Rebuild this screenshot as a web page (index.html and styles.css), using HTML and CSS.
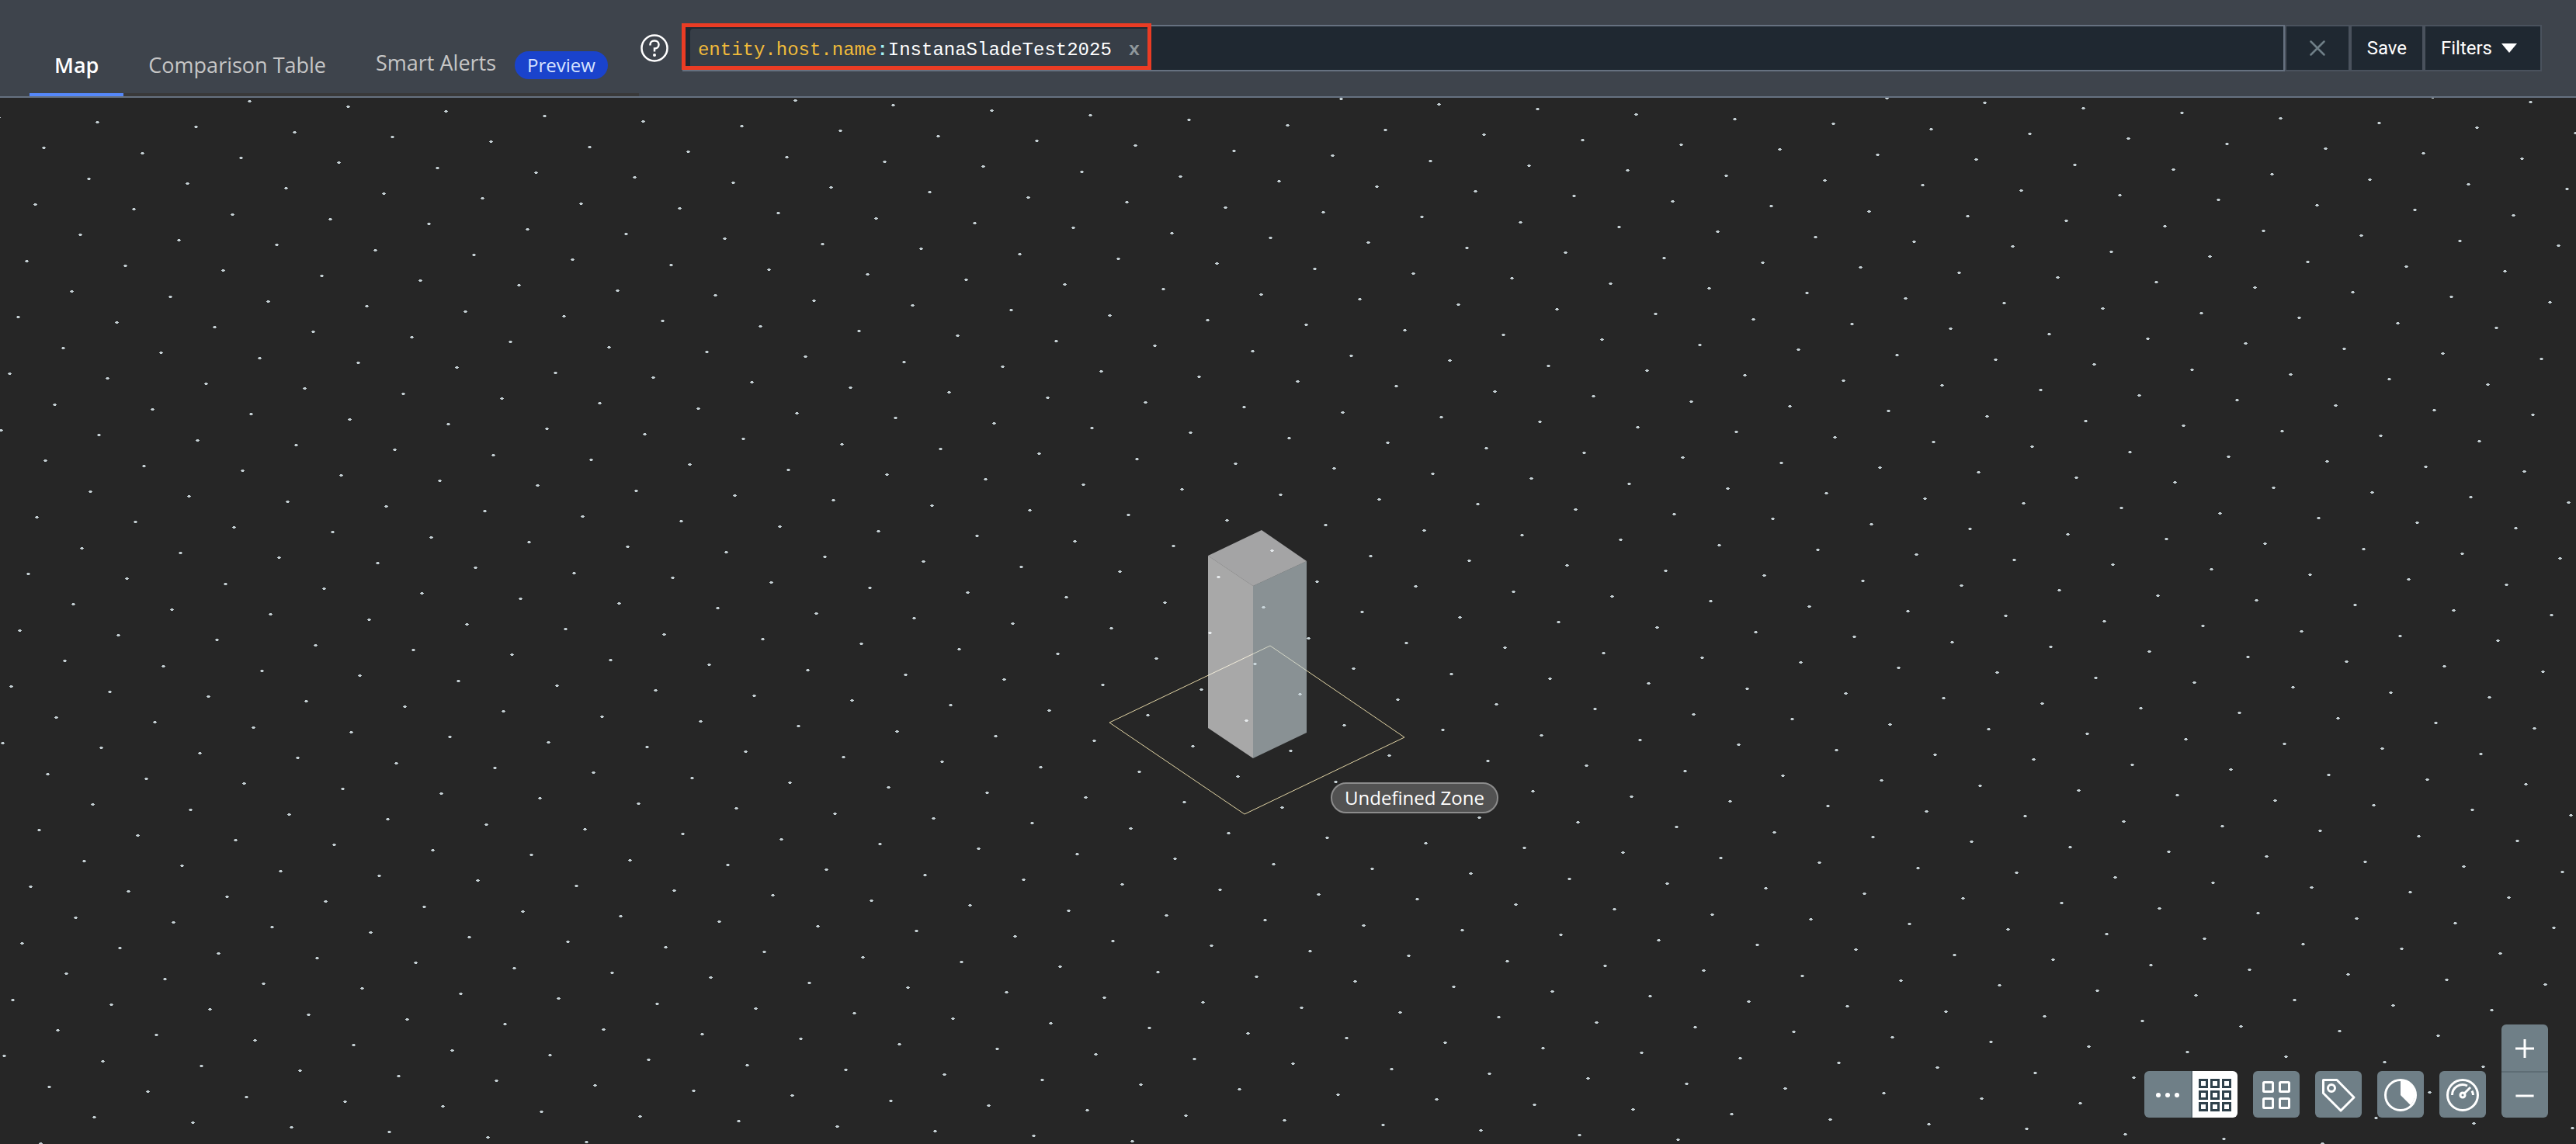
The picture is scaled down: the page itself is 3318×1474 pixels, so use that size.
FILE: index.html
```html
<!DOCTYPE html>
<html lang="en">
<head>
<meta charset="utf-8">
<title>Infrastructure Map</title>
<link rel="stylesheet" href="styles.css">
</head>
<body>
<header class="topbar">
  <nav class="tabs" aria-label="Views">
    <a class="tab tab-active" href="#map">Map</a>
    <a class="tab" href="#comparison">Comparison Table</a>
    <a class="tab tab-badged" href="#alerts"><span class="tab-label">Smart Alerts</span><span class="badge">Preview</span></a>
  </nav>
  <div class="search">
    <button class="help" type="button" aria-label="Help">
      <svg viewBox="0 0 36 36" width="36" height="36" fill="none" stroke="#fff" stroke-width="2"><circle cx="18" cy="18" r="16.5" stroke-width="2.5"/><path d="M12.500 14.500v-1a5 5 0 0 1 5-5h1a5 5 0 0 1 0 10h-.5v4" stroke-width="2.500"/><circle cx="18" cy="27" r="2" fill="#fff" stroke="none"/></svg>
    </button>
    <div class="query">
      <div class="highlight">
        <span class="chip"><span class="key">entity.host.name</span><span class="colon">:</span><span class="value">InstanaSladeTest2025</span><button class="chip-remove" type="button" aria-label="Remove filter">x</button></span>
      </div>
      <input class="query-input" type="text" aria-label="Search query">
    </div>
    <div class="actions">
      <button class="action action-clear" type="button" aria-label="Clear"><svg viewBox="0 0 20 20" width="20" height="20" stroke="#6f7f87" stroke-width="2.500" stroke-linecap="round"><path d="M1.500 1.500l17 17M18.500 1.500l-17 17"/></svg></button>
      <button class="action" type="button">Save</button>
      <button class="action action-filters" type="button">Filters <svg viewBox="0 0 20 12" width="20" height="12" fill="#fff"><path d="M0 0h20L10 12z"/></svg></button>
    </div>
  </div>
</header>
<main class="map">
  <svg class="scene" viewBox="0 0 3318 1348" preserveAspectRatio="xMidYMid slice" aria-hidden="true">
    <path id="stars" fill="#c3ced2"/>
    <path d="M1636 706L1809 824 1603 923 1429 805z" fill="none" stroke="#e0d3a4" stroke-width="1"/>
    <g>
      <path d="M1556 590L1614 629V851L1556 812z" fill="#fff" fill-opacity=".6"/>
      <path d="M1614 629L1683 597V818L1614 851z" fill="#cbd9de" fill-opacity=".6"/>
      <path d="M1556 590L1625 557 1683 597 1614 629z" fill="#f8f8fa" fill-opacity=".6"/>
    </g>
  </svg>
  <span class="zone">Undefined Zone</span>
  <div class="controls">
    <div class="pair">
      <button class="tool" type="button" aria-label="Compact"><svg viewBox="0 0 60 60" fill="#fff"><circle cx="18" cy="31" r="3"/><circle cx="30" cy="31" r="3"/><circle cx="42" cy="31" r="3"/></svg></button>
      <button class="tool tool-on" type="button" aria-label="Grid"><svg viewBox="0 0 58 60" fill="none" stroke="#2f414b" stroke-width="3"><path d="M9.500 11.500h9v9h-9zM24.500 11.500h9v9h-9zM39.500 11.500h9v9h-9zM9.500 26.500h9v9h-9zM24.500 26.500h9v9h-9zM39.500 26.500h9v9h-9zM9.500 41.500h9v9h-9zM24.500 41.500h9v9h-9zM39.500 41.500h9v9h-9z"/></svg></button>
    </div>
    <button class="tool" type="button" aria-label="Group"><svg viewBox="0 0 60 60" fill="none" stroke="#fff" stroke-width="3"><rect x="13.500" y="14.500" width="12" height="12" rx="1"/><rect x="34.500" y="14.500" width="12" height="12" rx="1"/><rect x="13.500" y="35.500" width="12" height="12" rx="1"/><rect x="34.500" y="35.500" width="12" height="12" rx="1"/></svg></button>
    <button class="tool" type="button" aria-label="Tags"><svg viewBox="0 0 60 60" fill="none" stroke="#fff" stroke-width="3" stroke-linejoin="round"><path d="M10.500 11.500h17.500L50 34 33 51 10.500 28.500z"/><circle cx="21" cy="22" r="4.500"/></svg></button>
    <button class="tool" type="button" aria-label="Metric"><svg viewBox="0 0 60 60" fill="none" stroke="#fff" stroke-width="3"><circle cx="30" cy="31" r="19.500"/><path d="M30 11V31L43 44A19.500 19.500 0 0 0 30 11z" fill="#fff" stroke="none"/></svg></button>
    <button class="tool" type="button" aria-label="Health"><svg viewBox="0 0 60 60" fill="none" stroke="#fff" stroke-width="3"><circle cx="30" cy="31" r="19.500"/><circle cx="30" cy="31" r="3"/><path d="M32.500 28.500L40 21M16.500 31a13.500 13.500 0 0 1 19.500-12M42 25.500a13.500 13.500 0 0 1 1.500 5.500"/></svg></button>
    <div class="zoom">
      <button class="tool" type="button" aria-label="Zoom in"><svg viewBox="0 0 60 60" stroke="#fff" stroke-width="3"><path d="M18 31h24M30 19v24"/></svg></button>
      <button class="tool" type="button" aria-label="Zoom out"><svg viewBox="0 0 60 60" stroke="#fff" stroke-width="3"><path d="M18 31h24"/></svg></button>
    </div>
  </div>
</main>
<script src="stars.js"></script>
</body>
</html>
```
FILE: styles.css
```css
* { box-sizing: border-box; }
body {
  margin: 0;
  min-height: 100vh;
  display: flex;
  flex-direction: column;
  background: #262626;
  color: #fff;
  font-family: "Roboto", "Liberation Sans", sans-serif;
  font-size: 24px;
}
button { margin: 0; padding: 0; border: 0; background: none; color: inherit; font: inherit; cursor: pointer; }
svg { display: block; }
.topbar {
  display: flex;
  height: 126px;
  padding-right: 44px;
  background: #3e444c;
  border-bottom: 2px solid #667180;
}
.tabs { display: flex; align-items: flex-end; padding-left: 38px; flex: none; font-family: "Open Sans", "Noto Sans", sans-serif; }
.tab {
  display: flex;
  align-items: flex-start;
  gap: 24px;
  height: 80px;
  padding: 22px 32px 0;
  border-bottom: 4px solid #393939;
  color: #c6c6c6;
  font-size: 27px;
  line-height: 36px;
  text-decoration: none;
  white-space: nowrap;
}
.tab-badged { padding-right: 40px; }
.tab-label { line-height: 30px; }
.tab-active { border-color: #5588fa; color: #fff; font-weight: 600; }
.badge { padding: 0 16px; border-radius: 18px; background: #1a43cc; color: #d6e3ff; font-size: 24px; line-height: 36px; }
.search { display: flex; align-items: flex-start; flex: 1; min-width: 0; padding-top: 32px; }
.help { flex: none; margin: 12px 18px 0 2px; }
.query { display: flex; flex: 1; min-width: 0; height: 60px; border: 2px solid #667180; background: #1f2831; }
.highlight {
  display: flex;
  flex: none;
  height: 60px;
  margin: -4px 0 0 -3px;
  padding: 2px 0 0 6px;
  border: 5px solid #ea3c24;
}
.chip {
  display: flex;
  align-items: center;
  padding: 6px 10px 0;
  border-radius: 4px 0 0 0;
  background: #373e47;
  font-family: "Liberation Mono", monospace;
  font-size: 24px;
}
.key { color: #f1bb3a; }
.colon { color: #a6f3f5; font-weight: 700; }
.chip-remove { margin-left: 22px; color: #8f979b; font-weight: 700; }
.query-input { flex: 1; min-width: 0; border: 0; background: transparent; color: #fff; font: inherit; }
.actions { display: flex; flex: none; }
.action {
  display: flex;
  align-items: center;
  justify-content: center;
  gap: 12px;
  height: 60px;
  padding: 0 20px;
  border: 2px solid #4a525d;
  background: #1f2831;
}
.action-clear { width: 84px; }
.action-filters { padding: 0 30px 0 20px; }
.map { position: relative; flex: 1; display: flex; justify-content: flex-end; align-items: flex-end; overflow: hidden; }
.scene { position: absolute; inset: 0; width: 100%; height: 100%; }
.zone {
  position: absolute;
  left: calc(50% + 55px);
  top: calc(50% + 208px);
  padding: 0 16px;
  border: 2px solid #8c8c8c;
  border-radius: 20px;
  background: #525252;
  font-family: "Open Sans", "Noto Sans", sans-serif;
  line-height: 36px;
}
.controls { position: relative; display: flex; align-items: flex-end; gap: 20px; padding: 0 36px 34px 0; }
.tool { width: 60px; height: 60px; border-radius: 6px; background: #6f7f87; }
.tool svg { width: 100%; height: 100%; }
.pair { display: flex; }
.pair .tool:first-child { width: 62px; border-right: 2px solid #5e6d75; border-radius: 6px 0 0 6px; }
.pair .tool-on { width: 58px; background: #fff; border-radius: 0 6px 6px 0; }
.zoom { display: flex; flex-direction: column; }
.zoom .tool:first-child { height: 62px; border-bottom: 2px solid #5e6d75; border-radius: 6px 6px 0 0; }
.zoom .tool:last-child { height: 58px; border-radius: 0 0 6px 6px; }
```
FILE: stars.js
```js
// Background stars sit on a skewed lattice spanned by two vectors.
const across = [126.8, 6.365];
const down = [57.854, 39.549];
const origin = [125, 31];
let d = "";
for (let n = -30; n < 60; n++) {
  for (let m = -60; m < 60; m++) {
    const x = Math.round(origin[0] + m * across[0] + n * down[0]);
    const y = Math.round(origin[1] + m * across[1] + n * down[1]);
    if (x < -6 || x > 3324 || y < -4 || y > 1352) continue;
    d += `M${x - 1} ${y - 1}h3v1h1v1h-1v1h-3v-1h-1v-1h1z`;
  }
}
document.getElementById("stars").setAttribute("d", d);
```
